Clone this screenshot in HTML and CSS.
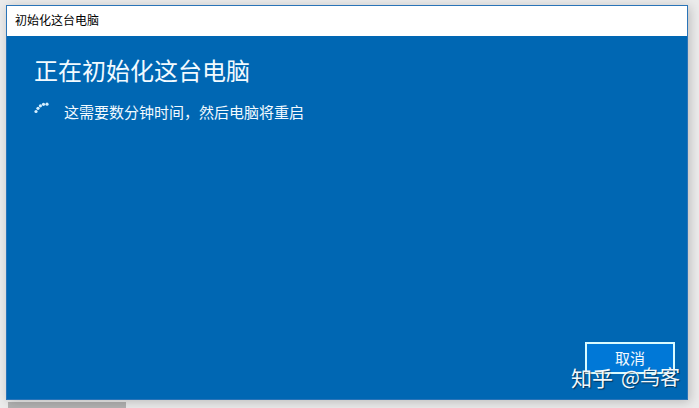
FILE: index.html
```
<!DOCTYPE html>
<html lang="zh-CN">
<head>
    <meta charset="UTF-8">
    <meta name="viewport" content="width=device-width, initial-scale=1.0">
    <title>初始化这台电脑</title>
    <link rel="stylesheet" href="styles.css">
</head>
<body>

    <div class="window">
        <header class="titlebar">初始化这台电脑</header>
        <main class="content">
            <h1>正在初始化这台电脑</h1>
            <div class="status">
                <svg class="spinner" width="20" height="20" viewBox="0 0 20 20" aria-hidden="true">
                    <circle cx="2" cy="10.5" r="1.6"/>
                    <circle cx="4" cy="7.3" r="1.6"/>
                    <circle cx="6.4" cy="4.8" r="1.6"/>
                    <circle cx="9.5" cy="3.3" r="1.6"/>
                    <circle cx="13" cy="3.2" r="1.6"/>
                </svg>
                <p>这需要数分钟时间，然后电脑将重启</p>
            </div>
            <div class="actions">
                <button type="button">取消</button>
            </div>
        </main>
        <div class="watermark"><span class="brand">知乎</span><span>@乌客</span></div>
    </div>

    <div class="scrollbar"></div>

</body>
</html>
```
FILE: styles.css
```
* {
    box-sizing: border-box;
}
body {
    font-family: "Noto Sans CJK SC", sans-serif;
    margin: 0;
    min-height: 100vh;
    display: flex;
    flex-direction: column;
    padding: 5px 11px 0 6px;
    background-color: #ebebeb;
}
.window {
    position: relative;
    flex: 1;
    display: flex;
    flex-direction: column;
    border: 1px solid #2a74b8;
    background-color: #0067b3;
    box-shadow: 2px 2px 10px rgba(0, 0, 0, 0.2);
}
.titlebar {
    height: 30px;
    padding-left: 8px;
    background-color: #fff;
    color: #000;
    font-size: 12px;
    line-height: 28px;
}
.content {
    flex: 1;
    display: flex;
    flex-direction: column;
    padding: 17px 12px 25px 27px;
    color: #f2faff;
}
h1 {
    margin: 0;
    font-size: 24px;
    font-weight: 400;
    line-height: 34px;
}
.status {
    display: flex;
    align-items: flex-start;
    gap: 10px;
    margin-top: 14px;
}
.status p {
    margin: 0;
    font-size: 15px;
    line-height: 22px;
}
.spinner {
    fill: #d5efff;
}
.actions {
    display: flex;
    justify-content: flex-end;
    margin-top: auto;
}
button {
    width: 90px;
    height: 32px;
    padding: 0;
    border: 2px solid #d9fbff;
    background-color: #0078d7;
    color: #f2faff;
    font-family: inherit;
    font-size: 15px;
    line-height: 26px;
    cursor: pointer;
}
button:hover {
    background-color: #1a86db;
}
.watermark {
    position: absolute;
    right: 7px;
    bottom: 7px;
    display: flex;
    align-items: center;
    gap: 8px;
    color: #f2f8fc;
    font-size: 20px;
    line-height: 30px;
    text-shadow: 1px 1px 1px rgba(0, 0, 0, 0.5);
    pointer-events: none;
}
.brand {
    font-size: 21px;
}
.scrollbar {
    width: 118px;
    height: 6px;
    margin: 2px 0 0 2px;
    background-color: #b2b2b2;
}
```
